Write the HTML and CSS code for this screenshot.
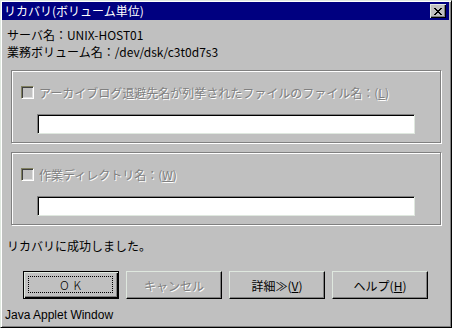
FILE: index.html
```html
<!DOCTYPE html>
<html lang="ja">
<head>
  <meta charset="UTF-8">
  <title>リカバリ(ボリューム単位)</title>
  <link rel="stylesheet" href="styles.css">
</head>
<body>
  <div class="window">
    <div class="titlebar">
      <span class="title">リカバリ(ボリューム単位)</span>
      <button class="close" type="button">
        <svg width="8" height="7" viewBox="0 0 8 7">
          <path d="M0 0h2v1h1v1h2v-1h1v-1h2v1h-1v1h-1v1h-1v1h1v1h1v1h1v1h-2v-1h-1v-1h-2v1h-1v1h-2v-1h1v-1h1v-1h1v-1h-1v-1h-1v-1h-1z" fill="#000"/>
        </svg>
      </button>
    </div>

    <div class="info">
      <div>サーバ名：UNIX-HOST01</div>
      <div>業務ボリューム名：/dev/dsk/c3t0d7s3</div>
    </div>

    <div class="group">
      <label class="check disabled">
        <span class="box"></span>
        <span>アーカイブログ退避先名が列挙されたファイルのファイル名：(<u>L</u>)</span>
      </label>
      <div class="field"></div>
    </div>

    <div class="group second">
      <label class="check disabled">
        <span class="box"></span>
        <span>作業ディレクトリ名：(<u>W</u>)</span>
      </label>
      <div class="field"></div>
    </div>

    <div class="status">リカバリに成功しました。</div>

    <div class="buttons">
      <button class="btn default" type="button"><span class="focus">OK</span></button>
      <button class="btn off" type="button">キャンセル</button>
      <button class="btn" type="button">詳細≫(<u>V</u>)</button>
      <button class="btn" type="button">ヘルプ(<u>H</u>)</button>
    </div>

    <div class="applet">Java Applet Window</div>
  </div>
</body>
</html>
```

FILE: styles.css
```css
body {
  margin: 0;
  background: #c0c0c0;
  font-family: "Noto Sans CJK JP", "Liberation Sans", sans-serif;
  font-size: 12px;
  color: #000;
}

.window {
  width: 452px;
  height: 328px;
  box-sizing: border-box;
  padding: 2px;
  background: #c0c0c0;
  border-left: 1px solid #dfe8df;
  border-top: 1px solid #dfe8df;
  border-right: 1px solid #000;
  border-bottom: 1px solid #000;
  box-shadow: inset 1px 1px #fff, inset -1px -1px #808080;
  display: flex;
  flex-direction: column;
  overflow: hidden;
}

.titlebar {
  height: 18px;
  margin: -1px 0 0 -1px;
  background: #000080;
  color: #fff;
  display: flex;
  align-items: center;
  justify-content: space-between;
  padding: 0 3px 0 2px;
}

.title {
  line-height: 18px;
}

.close {
  width: 16px;
  height: 14px;
  padding: 0;
  background: #c0c0c0;
  border: none;
  box-shadow: inset 1px 1px #dfe8df, inset -1px -1px #000, inset -2px -2px #808080;
  display: flex;
  align-items: center;
  justify-content: center;
}

.info {
  padding: 6px 0 0 4px;
  line-height: 17px;
}

.group {
  margin: 10px 8px 0 8px;
  border: 1px solid #808080;
  box-shadow: inset 1px 1px #fff, 1px 1px #fff;
  padding: 15px 0 0 9px;
  height: 56px;
}

.group.second {
  margin-top: 9px;
}

.check {
  display: flex;
  align-items: center;
  gap: 5px;
  line-height: 13px;
}

.disabled {
  color: #808080;
  text-shadow: 1px 1px #fff;
}

.box {
  width: 13px;
  height: 13px;
  box-sizing: border-box;
  border-top: 1px solid #808060;
  border-left: 1px solid #808060;
  border-right: 1px solid #fff;
  border-bottom: 1px solid #fff;
  box-shadow: inset 1px 1px #404040, inset -1px -1px #dfdfdf;
  background: #c0c0c0;
}

.field {
  margin: 15px 0 0 16px;
  width: 378px;
  height: 20px;
  box-sizing: border-box;
  background: #fff;
  border-top: 1px solid #808080;
  border-left: 1px solid #808080;
  border-right: 1px solid #dfe8df;
  border-bottom: 1px solid #dfe8df;
  box-shadow: inset 1px 1px #000;
}

.status {
  padding: 12px 0 0 4px;
  line-height: 17px;
}

.buttons {
  display: flex;
  gap: 7px;
  margin: 17px 0 0 20px;
}

.btn {
  width: 96px;
  height: 28px;
  padding: 0;
  font: inherit;
  color: #000;
  background: #c0c0c0;
  border-top: 1px solid #dfe8df;
  border-left: 1px solid #dfe8df;
  border-right: 1px solid #000;
  border-bottom: 1px solid #000;
  box-shadow: inset -1px -1px #808080;
}

.btn.off {
  color: #808080;
  text-shadow: 1px 1px #fff;
}

.btn.default {
  border: 1px solid #000;
  box-shadow: inset 1px 1px #dfe8df, inset -1px -1px #000, inset -2px -2px #808080;
  padding: 4px 5px 5px 4px;
}

.focus {
  display: flex;
  align-items: center;
  justify-content: center;
  height: 100%;
  border: 1px dotted #000;
  box-sizing: border-box;
  letter-spacing: 5px;
  padding-left: 5px;
  font-weight: 300;
}

.applet {
  margin-top: auto;
  padding: 0 0 1px 2px;
  line-height: 17px;
  font-family: "Liberation Sans", sans-serif;
}
```
